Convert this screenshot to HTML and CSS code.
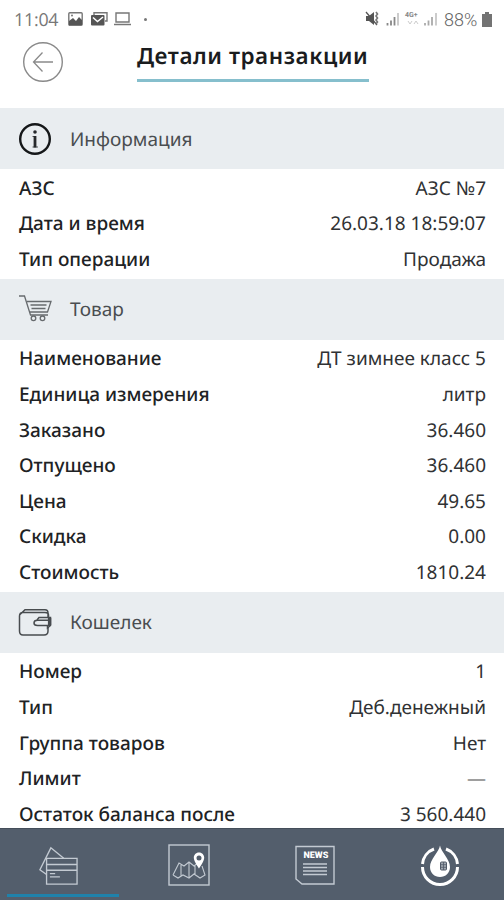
FILE: index.html
```
<!DOCTYPE html>
<html lang="ru">
<head>
    <meta charset="UTF-8" />
    <meta name="viewport" content="width=device-width, initial-scale=1.0"/>
    <title>Детали транзакции</title>
    <link rel="stylesheet" href="styles.css">
</head>
<body>
    <div class="screen">
        <div class="status-bar">
            <div class="status-left">
                <span class="clock">11:04</span>
                <svg width="72" height="18" viewBox="0 0 72 18">
                    <rect x="0.8" y="2.8" width="13.4" height="12.4" rx="1" fill="none" stroke="#777" stroke-width="1.4"/>
                    <path d="M1 14V11L5 8L8 11L11 7L14 10V15H1z" fill="#555"/>
                    <circle cx="4" cy="5.5" r="1" fill="#777"/>
                    <path d="M26 5V2.700H39V11H37" fill="none" stroke="#777" stroke-width="1.400"/>
                    <rect x="23" y="5" width="13.500" height="10.500" rx="1" fill="#555"/>
                    <path d="M25 7.500L29.500 11.500L35 7" fill="none" stroke="#fff" stroke-width="1.500"/>
                    <path d="M48 3H61V12H48zM46 14.500H63" fill="none" stroke="#777" stroke-width="1.400"/>
                </svg>
                <span class="dot"></span>
            </div>
            <div class="status-right">
                <svg width="74" height="18" viewBox="0 0 74 18">
                    <path d="M1 6H4L9 2V15L4 11H1z" fill="#555"/>
                    <path d="M1 2L12 15" stroke="#555" stroke-width="1.300"/>
                    <path d="M11 2L12.500 4L11 6L12.500 8L11 10L12.500 12L11 14" fill="none" stroke="#777" stroke-width="1.600"/>
                    <path d="M22.500 13V15.500M26 10.500V15.500M29.500 7V15.500" stroke="#888" stroke-width="1.800"/>
                    <path d="M33 3V15.500" stroke="#ccc" stroke-width="2"/>
                    <text x="40" y="7" class="network">4G+</text>
                    <path d="M43 11L45 14L47 11M49 14L51 11L53 14" fill="none" stroke="#ccc"/>
                    <path d="M60 13V15.500M63.500 10.500V15.500M67 7V15.500" stroke="#aaa" stroke-width="1.800"/>
                    <path d="M71 3V15.500" stroke="#ccc" stroke-width="2"/>
                </svg>
                <span class="percent">88%</span>
                <svg width="10" height="16" viewBox="0 0 10 16">
                    <path d="M3 1H7V3H10V16H0V3H3z" fill="#737373"/>
                </svg>
            </div>
        </div>

        <header class="header">
            <button class="back-btn" aria-label="Назад">
                <svg width="42" height="42" viewBox="0 0 42 42" fill="none" stroke="#8a8a8a">
                    <circle cx="21" cy="21" r="19.300" stroke-width="1.400"/>
                    <path d="M31 21H12M20.500 11.500L11.500 21L20.500 30.500" stroke-width="1.300"/>
                </svg>
            </button>
            <h1>Детали транзакции</h1>
        </header>

        <main class="content">
            <section>
                <h2>
                    <svg width="34" height="34" viewBox="0 0 34 34">
                        <circle cx="17" cy="17" r="14.800" fill="none" stroke="#151719" stroke-width="2.400"/>
                        <circle cx="17" cy="10" r="1.800" fill="#26292b"/>
                        <path d="M14.500 14.500H17.200V25M14.500 25H20" fill="none" stroke="#55585b" stroke-width="1"/>
                        <path d="M17 14V25.500" stroke="#26292b" stroke-width="2.800"/>
                    </svg>
                    <span>Информация</span>
                </h2>
                <dl>
                    <div class="row"><dt>АЗС</dt><dd>АЗС №7</dd></div>
                    <div class="row"><dt>Дата и время</dt><dd>26.03.18 18:59:07</dd></div>
                    <div class="row"><dt>Тип операции</dt><dd>Продажа</dd></div>
                </dl>
            </section>

            <section>
                <h2>
                    <svg width="34" height="34" viewBox="0 0 34 34" fill="none" stroke="#676b6e" stroke-width="1.300">
                        <path d="M1 4H6.500L12.500 23H30M9 9.500H33L29.500 20H12M12.500 13H28.500M13.500 16.500H27.500"/>
                        <circle cx="15.500" cy="26.300" r="2.300"/>
                        <circle cx="24.500" cy="26.300" r="2.300"/>
                    </svg>
                    <span>Товар</span>
                </h2>
                <dl>
                    <div class="row"><dt>Наименование</dt><dd>ДТ зимнее класс 5</dd></div>
                    <div class="row"><dt>Единица измерения</dt><dd>литр</dd></div>
                    <div class="row"><dt>Заказано</dt><dd>36.460</dd></div>
                    <div class="row"><dt>Отпущено</dt><dd>36.460</dd></div>
                    <div class="row"><dt>Цена</dt><dd>49.65</dd></div>
                    <div class="row"><dt>Скидка</dt><dd>0.00</dd></div>
                    <div class="row"><dt>Стоимость</dt><dd>1810.24</dd></div>
                </dl>
            </section>

            <section>
                <h2>
                    <svg width="34" height="34" viewBox="0 0 34 34" fill="none" stroke="#484c4f" stroke-width="1.500">
                        <path d="M30.500 12V10Q30.500 7.500 27 7.500H5Q1.500 7.500 1.500 11V26Q1.500 30 5 30H26Q30 30 30 26V22M2 9.500L7 4.800H27Q30 4.800 30 8V12"/>
                        <path d="M32.500 13V20.500L29.500 23V20.500H19.500Q16 20.500 16 18Q16 15.300 19.500 15.300H31"/>
                        <path d="M19 15L21 12.500H32.500V20" />
                        <path d="M31 13V21" stroke-width="2.200"/>
                    </svg>
                    <span>Кошелек</span>
                </h2>
                <dl>
                    <div class="row"><dt>Номер</dt><dd>1</dd></div>
                    <div class="row"><dt>Тип</dt><dd>Деб.денежный</dd></div>
                    <div class="row"><dt>Группа товаров</dt><dd>Нет</dd></div>
                    <div class="row"><dt>Лимит</dt><dd class="empty">—</dd></div>
                    <div class="row"><dt>Остаток баланса после</dt><dd>3 560.440</dd></div>
                </dl>
            </section>
        </main>

        <nav class="tabs">
            <a class="tab cards active">
                <svg width="40" height="40" viewBox="0 0 42 42" fill="none" stroke="#c3cad2" stroke-width="1.400">
                    <path d="M9 31L2 26L13.500 3L27 14"/>
                    <path d="M9 14H41V41H9zM9 20.500H41M9 26.500H41M12.500 30H18M12.500 33.500H23"/>
                </svg>
            </a>
            <a class="tab">
                <svg width="42" height="42" viewBox="0 0 42 42" fill="none" stroke="#c3cad2" stroke-width="1.400">
                    <rect x="1" y="1" width="40" height="40"/>
                    <path d="M5 31L11 19L16 22L21 18L26 22L30 19M34 22L37 31L32 34L26 30L21 34L15 31L10 34L5 31M13 21V32M21 18V33M27 22V30" stroke-width="1.100"/>
                    <path d="M31 8.500C27.800 8.500 25.800 11 25.800 13.800C25.800 17.500 31 24.500 31 24.500S36.200 17.500 36.200 13.800C36.200 11 34.200 8.500 31 8.500zM31 11.500A2.500 2.500 0 1 1 31 16.500A2.500 2.500 0 1 1 31 11.500z" fill="#fff" fill-rule="evenodd" stroke="none"/>
                </svg>
            </a>
            <a class="tab news">
                <svg width="42" height="42" viewBox="0 0 42 42" fill="none" stroke="#c3cad2" stroke-width="1.400">
                    <path d="M2 2.500H40V40H8L2 35z"/>
                    <path d="M9 20H33M9 23.500H33M9 27H33M9 30.500H33" stroke-width="1.700"/>
                    <text x="9.500" y="13.500" class="news-text">NEWS</text>
                </svg>
            </a>
            <a class="tab fuel">
                <svg width="42" height="42" viewBox="0 0 42 42" fill="none">
                    <path d="M15 5A17.500 17.500 0 0 0 3.500 20M3.500 23A17.500 17.500 0 0 0 38.500 23M38.500 20A17.500 17.500 0 0 0 27 5" stroke="#fff" stroke-width="3"/>
                    <path d="M21 1.500C20 8 11 15 11 23C11 29 15.500 33 21 33S31 29 31 23C31 15 22 8 21 1.500z" fill="#fff"/>
                    <rect x="21.500" y="18" width="6" height="8" rx="1" fill="#a1a8b0" stroke="#535c69"/>
                    <path d="M21.500 20.700H27.500M21.500 23.300H27.500M24.500 18V26" stroke="#535c69" stroke-width="0.800"/>
                </svg>
            </a>
        </nav>
    </div>
</body>
</html>
```
FILE: styles.css
```
* {
    margin: 0;
    padding: 0;
    box-sizing: border-box;
}

body {
    font-family: 'Noto Sans', 'Open Sans', sans-serif;
    background: #fff;
    color: #202224;
    text-rendering: geometricPrecision;
}

.screen {
    width: 100%;
    height: 900px;
    display: flex;
    flex-direction: column;
    overflow: hidden;
}

/* Status bar */
.status-bar {
    height: 38px;
    padding: 0 12px 0 14px;
    display: flex;
    justify-content: space-between;
    align-items: center;
    flex-shrink: 0;
}

.status-left,
.status-right {
    display: flex;
    align-items: center;
    font-family: Roboto, sans-serif;
    font-weight: 300;
    color: #666;
}

.clock {
    width: 54px;
    padding-top: 1px;
    font-family: 'Open Sans', sans-serif;
    font-size: 17.8px;
    font-weight: 400;
    letter-spacing: -0.2px;
    color: #777;
}

.dot {
    width: 3px;
    height: 3px;
    margin-left: 4px;
    border-radius: 50%;
    background: #777;
}

.percent {
    width: 38px;
    margin-left: 5px;
    padding-top: 2px;
    font-size: 18px;
}

.network {
    font: 700 7px Roboto, sans-serif;
    fill: #888;
}

/* Title */
.header {
    height: 70px;
    display: flex;
    align-items: flex-start;
    flex-shrink: 0;
}

.back-btn {
    width: 42px;
    height: 42px;
    margin: 3px 73px 0 22px;
    border: none;
    background: none;
}

h1 {
    width: 232px;
    height: 44px;
    border-bottom: 3px solid #86bfcd;
    font-size: 22.5px;
    font-weight: 600;
    line-height: 36px;
    letter-spacing: 0.55px;
    white-space: nowrap;
    color: #1a1c1e;
}

/* Sections */
.content {
    flex: 1;
    overflow: hidden;
}

h2 {
    height: 61px;
    padding-left: 18px;
    display: flex;
    align-items: center;
    gap: 18px;
    background: #e9edf0;
    font-size: 19px;
    font-weight: 400;
    color: #4a4d50;
}

dl {
    padding: 1px 18px 1.8px 19px;
}

.row {
    height: 35.6px;
    display: flex;
    justify-content: space-between;
    align-items: center;
    font-size: 19px;
    white-space: nowrap;
}

dt {
    font-weight: 500;
}

dd {
    color: #303234;
}

.empty {
    color: #888;
}

/* Bottom tabs */
.tabs {
    height: 72px;
    padding: 0 1px 0 5px;
    display: flex;
    flex-shrink: 0;
    background: #535e6c;
    border-top: 1px solid #444e5a;
}

.tab {
    width: 25%;
    height: 71px;
    padding-right: 5px;
    display: flex;
    align-items: center;
    justify-content: center;
}

.cards {
    padding-right: 18px;
}

.news {
    padding-right: 2px;
}

.fuel {
    padding-right: 1px;
}

.active {
    background: linear-gradient(#1f82ab, #1f82ab) 2px 65px / 112px 3px no-repeat;
}

.news-text {
    font: 900 9px Roboto, sans-serif;
    fill: #fff;
    stroke: none;
}
```
